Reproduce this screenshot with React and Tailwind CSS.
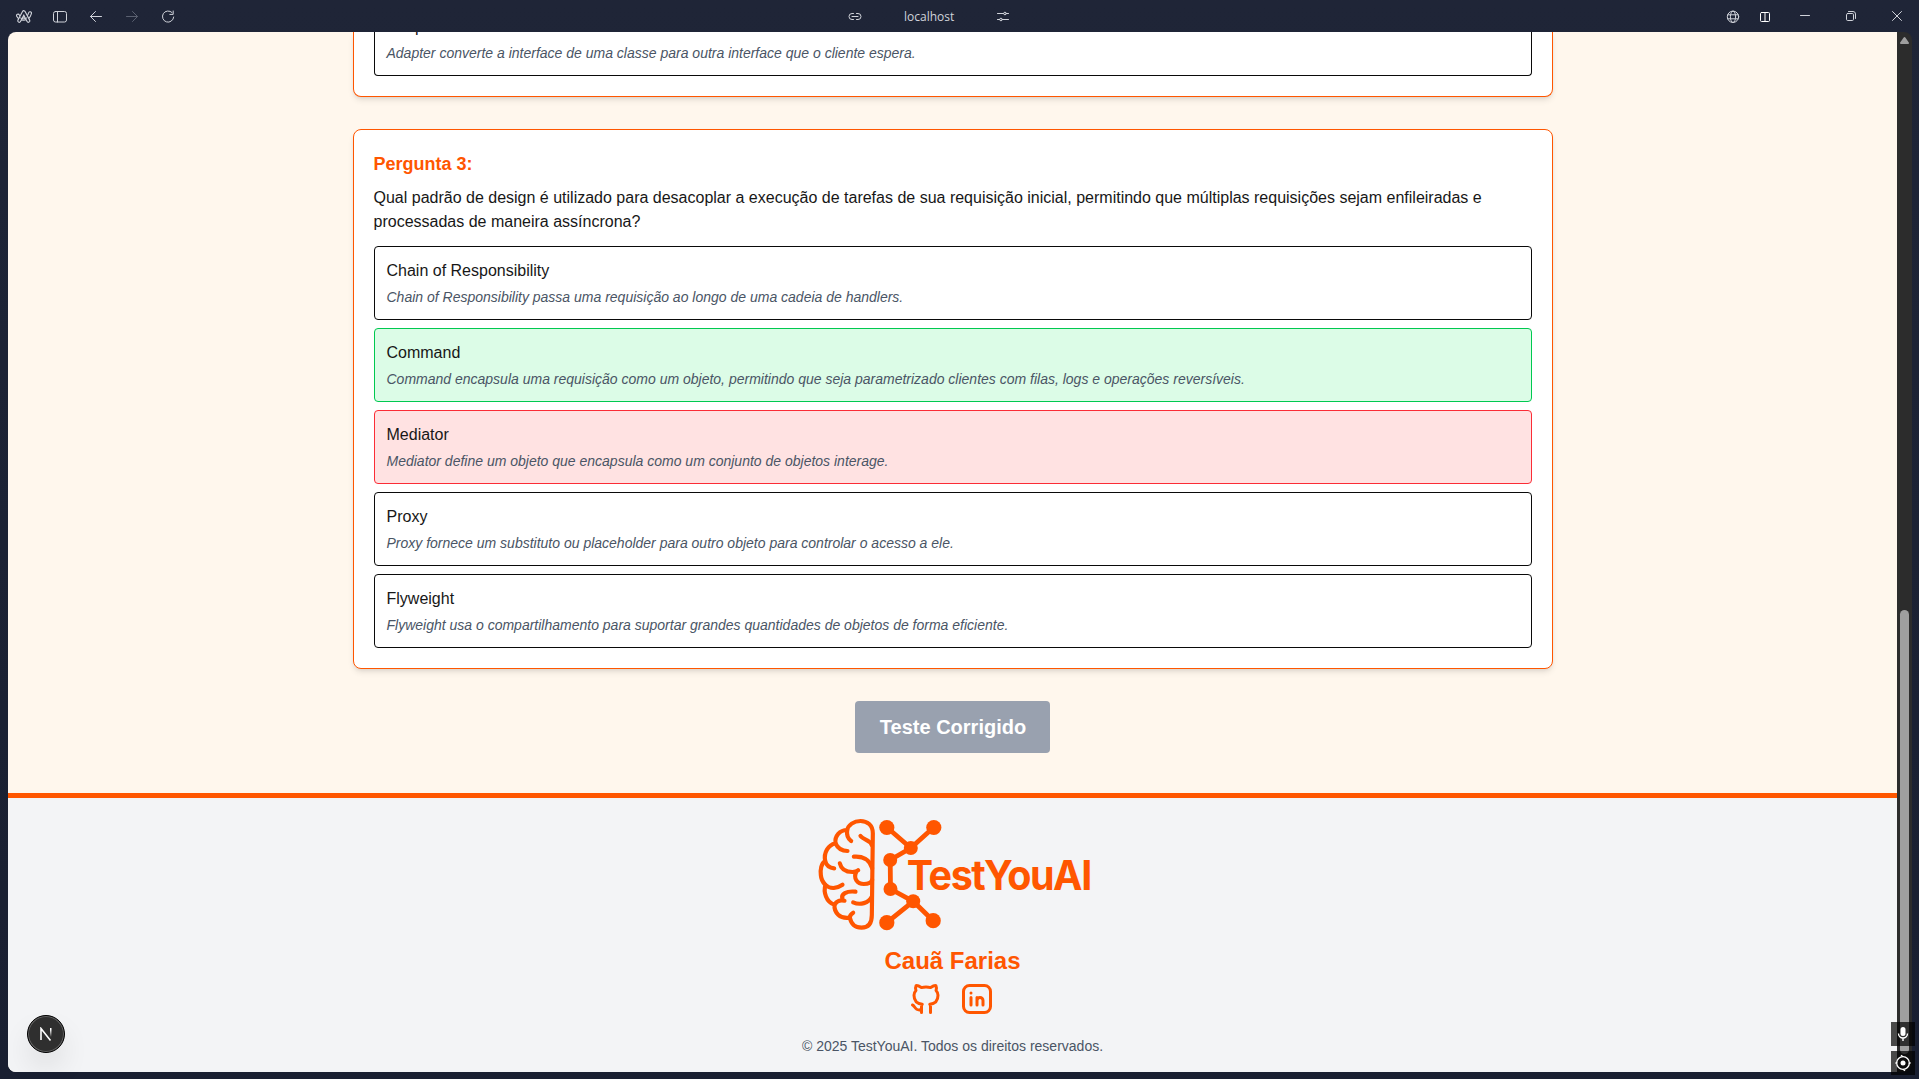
import React from "react";

const questionOptions = [
  { title: "Chain of Responsibility", note: "Chain of Responsibility passa uma requisição ao longo de uma cadeia de handlers.", tone: "border-[#0a0a0a]" },
  { title: "Command", note: "Command encapsula uma requisição como um objeto, permitindo que seja parametrizado clientes com filas, logs e operações reversíveis.", tone: "border-[#00c950] bg-[#dcfce7]" },
  { title: "Mediator", note: "Mediator define um objeto que encapsula como um conjunto de objetos interage.", tone: "border-[#fb2c36] bg-[#ffe2e2]" },
  { title: "Proxy", note: "Proxy fornece um substituto ou placeholder para outro objeto para controlar o acesso a ele.", tone: "border-[#0a0a0a]" },
  { title: "Flyweight", note: "Flyweight usa o compartilhamento para suportar grandes quantidades de objetos de forma eficiente.", tone: "border-[#0a0a0a]" },
];

function Glyph({ w = 16, h = 16, className = "", sw = 1, children }) {
  return (
    <svg width={w} height={h} viewBox={`0 0 ${w} ${h}`} className={`shrink-0 ${className}`} fill="none" stroke="currentColor" strokeWidth={sw} strokeLinecap="round" strokeLinejoin="round">
      {children}
    </svg>
  );
}

function TitleBar() {
  return (
    <header className="flex h-8 shrink-0 pt-2 text-[#d0d3da]">
      <div className="flex w-[847px] gap-5 pl-4">
        <Glyph>
          <path d="M2 7.600C4 11.600 12 12.600 14 5.200" strokeWidth="4" />
          <path d="M2 7.600C4 11.600 12 12.600 14 5.200" strokeWidth="1.800" stroke="#1f2537" />
          <path d="M3.200 12.800L7.800 4.200L12.400 12.800" strokeWidth="4" />
          <path d="M3.200 12.800L7.800 4.200L12.400 12.800" strokeWidth="1.800" stroke="#1f2537" />
          <path d="M4.500 10C6.500 11 9 11 10.800 10" strokeWidth="1" />
        </Glyph>
        <Glyph>
          <rect x="1.500" y="3.500" width="13" height="10.500" rx="2" />
          <path d="M5.500 4v10" />
        </Glyph>
        <Glyph>
          <path d="M2.500 8.500h11M7.500 3.500l-5 5 5 5" />
        </Glyph>
        <Glyph className="text-[#5a6070]">
          <path d="M2.500 8.500h11M8.500 3.500l5 5-5 5" />
        </Glyph>
        <Glyph>
          <path d="M12 4.500a5.600 5.600 0 1 0 1.700 4.500M13.200 3v3.400H9.800" />
        </Glyph>
      </div>
      <Glyph>
        <path d="M6.500 5.500H5a3 3 0 0 0 0 6h1.500M9.500 5.500H11a3 3 0 0 1 0 6H9.500M5 8.500h6" />
      </Glyph>
      <span className="ml-[41px] w-[91px] font-['Open_Sans',sans-serif] text-[12px] leading-[17px]">localhost</span>
      <Glyph>
        <path d="M2.500 5.500h6M11.500 5.500h2M2.500 11.500h2M7.500 11.500h6" />
        <circle cx="10" cy="5.500" r="1.300" />
        <circle cx="6" cy="11.500" r="1.300" />
      </Glyph>
      <div className="flex flex-1 justify-end pr-[14px]">
        <Glyph className="mr-4">
          <circle cx="8" cy="8.800" r="5.700" />
          <ellipse cx="8" cy="8.800" rx="2.600" ry="5.700" />
          <path d="M2.800 6.800h10.400M2.800 10.800h10.400" />
        </Glyph>
        <Glyph className="mr-6 text-white">
          <rect x="3.500" y="4.500" width="9" height="9" rx="1" />
          <path d="M8 5v8.500" />
        </Glyph>
        <Glyph className="mr-[30px]">
          <path d="M3.500 7.500h9" />
        </Glyph>
        <Glyph className="mr-[30px]">
          <rect x="3.500" y="5.500" width="7" height="7" rx="1.200" />
          <path d="M5.500 3.500H10A2.500 2.500 0 0 1 12.500 6v4.500" />
        </Glyph>
        <Glyph>
          <path d="M3.500 3.500l9 9M12.500 3.500l-9 9" />
        </Glyph>
      </div>
    </header>
  );
}

function Option({ title, note, tone }) {
  return (
    <li className={`rounded-[4px] border p-3 ${tone}`}>
      <p className="text-base text-[#171717]">{title}</p>
      <p className="mt-1 text-sm text-[#4a5565] italic">{note}</p>
    </li>
  );
}

function Logo() {
  return (
    <svg width="290" height="120" viewBox="0 0 290 120" className="overflow-visible text-[#ff5600]" fill="none" stroke="currentColor" strokeLinecap="round" strokeLinejoin="round">
      <g strokeWidth="12.500" transform="translate(-14.500 -34) scale(0.33333)">
        <path d="M214 405L217 160C217 135 200 123 180 123C160 123 143 135 140 150C118 150 102 168 105 190C83 196 69 217 74 243C62 250 59 270 61 285C62 300 68 308 75 315C68 335 77 367 102 374C100 397 118 418 148 413C152 432 165 443 183 443C203 443 214 430 214 405Z" />
        <path d="M140 150C138 165 142 176 152 183M105 190C112 205 125 213 141 213M74 243C78 258 88 264 101 265M180 168C190 181 206 178 214 195" />
        <path d="M160 230C185 228 208 237 215 265M118 250C122 268 136 276 156 276C165 276 170 274 173 271M167 276C158 295 170 312 190 312C203 312 212 308 215 300" />
        <path d="M75 315C90 328 110 325 126 314M102 374C108 364 120 359 132 362M126 358C120 342 138 332 165 335M158 367C178 376 205 370 214 350M148 413C148 407 152 402 158 398" />
      </g>
      <path strokeWidth="4.800" d="M71.800 13.300L95.800 34L118.800 13.300M95.800 34L75.200 46L75.500 75L98.200 87.300L118.200 106.700M98.200 87.300L71.800 108.700" />
      <g fill="currentColor" stroke="none">
        <circle cx="71.800" cy="13.500" r="7.600" />
        <circle cx="118.800" cy="13.500" r="7.600" />
        <circle cx="95.800" cy="34" r="7" />
        <circle cx="75.200" cy="46" r="7" />
        <circle cx="75.500" cy="75" r="7" />
        <circle cx="98.200" cy="87.300" r="7" />
        <circle cx="118.200" cy="106.700" r="7.600" />
        <circle cx="71.800" cy="108.700" r="7.600" />
        <text x="91.800" y="75.600" fontSize="41" fontWeight="700" letterSpacing="-1.500" textLength="184" lengthAdjust="spacingAndGlyphs" className="font-['Inter',sans-serif]">TestYouAI</text>
      </g>
    </svg>
  );
}

function Social() {
  const common = { width: 36, height: 36, viewBox: "0 0 24 24", fill: "none", stroke: "currentColor", strokeWidth: 2, strokeLinecap: "round", strokeLinejoin: "round" };
  return (
    <div className="mr-0.5 flex gap-[15px] text-[#ff5600]">
      <svg {...common}>
        <path d="M9 19c-4.3 1.4 -4.3 -2.5 -6 -3m12 5v-3.5c0 -1 .1 -1.4 -.5 -2c2.8 -.3 5.5 -1.4 5.5 -6a4.6 4.6 0 0 0 -1.3 -3.2a4.2 4.2 0 0 0 -.1 -3.2s-1.1 -.3 -3.5 1.3a12.3 12.3 0 0 0 -6.2 0c-2.4 -1.6 -3.5 -1.3 -3.5 -1.3a4.2 4.2 0 0 0 -.1 3.2a4.6 4.6 0 0 0 -1.3 3.2c0 4.6 2.7 5.7 5.5 6c-.6 .6 -.6 1.2 -.5 2v3.5" />
      </svg>
      <svg {...common}>
        <path d="M8 11v5M8 8v.01M12 16v-5M16 16v-3a2 2 0 1 0 -4 0" />
        <rect x="3" y="3" width="18" height="18" rx="4" />
      </svg>
    </div>
  );
}

function Footer() {
  return (
    <footer className="flex h-[279px] shrink-0 flex-col items-center border-t-5 border-[#ff5600] bg-[#f3f4f6]">
      <div className="mt-4 ml-[14px] h-[120px]">
        <Logo />
      </div>
      <p className="mt-[11px] text-2xl font-bold text-[#ff5600]">Cauã Farias</p>
      <div className="mt-[3.5px]">
        <Social />
      </div>
      <p className="mt-[19.5px] text-sm text-[#4a5565]">© 2025 TestYouAI. Todos os direitos reservados.</p>
    </footer>
  );
}

export default function App() {
  return (
    <div className="relative flex h-[1079px] w-[1919px] flex-col overflow-hidden bg-linear-to-b from-[#1f2537] to-[#191f31] font-['Liberation_Sans',Arial,sans-serif]">
      <TitleBar />
      <div className="mr-[7px] ml-2 flex h-[1040px] overflow-hidden rounded-lg">
        <div className="flex w-[1889px] flex-col bg-[#fff7ed]">
          <main className="flex flex-1 flex-col items-center">
            <section className="flex h-[65px] w-[1200px] flex-col justify-end rounded-b-lg border border-t-0 border-[#ff5600] bg-white px-5 pb-5 shadow-md">
              <div className="flex h-11 flex-col justify-end overflow-hidden rounded-b-[4px] border border-t-0 border-[#0a0a0a] px-3 pb-3">
                <p className="shrink-0 text-base text-[#171717]">Adapter</p>
                <p className="mt-1 shrink-0 text-sm text-[#4a5565] italic">Adapter converte a interface de uma classe para outra interface que o cliente espera.</p>
              </div>
            </section>
            <section className="mt-8 w-[1200px] rounded-lg border border-[#ff5600] bg-white p-5 shadow-md">
              <h2 className="mb-2 text-lg leading-7 font-bold text-[#ff5600]">Pergunta 3:</h2>
              <p className="mb-3 text-base text-[#171717]">Qual padrão de design é utilizado para desacoplar a execução de tarefas de sua requisição inicial, permitindo que múltiplas requisições sejam enfileiradas e processadas de maneira assíncrona?</p>
              <ul className="flex flex-col gap-2">
                {questionOptions.map((option) => (
                  <Option key={option.title} {...option} />
                ))}
              </ul>
            </section>
            <button className="mt-8 h-[52px] w-[195px] rounded-[4px] bg-[#99a1af] pl-px text-xl font-bold text-white">Teste Corrigido</button>
          </main>
          <Footer />
        </div>
        <div className="flex w-[15px] flex-col items-center bg-[#2c2c2c]">
          <Glyph w={15} h={16} className="text-[#9f9f9f]">
            <path d="M4 11L7.500 6L11 11Z" fill="currentColor" strokeWidth="2" />
          </Glyph>
          <div className="mt-[562px] h-[444px] w-[9px] rounded-full bg-[#9f9f9f]" />
        </div>
      </div>

      <div className="absolute top-[1015px] left-[27px] flex size-[38px] items-center justify-center rounded-full border border-black bg-[#2f2f2f] shadow-[0_16px_32px_-8px_rgba(0,0,0,0.24),inset_0_0_0_1px_rgba(255,255,255,0.25)]">
        <svg width="14" height="14" viewBox="0 0 14 14" fill="none" strokeWidth="1.600">
          <defs>
            <linearGradient id="nFade" x1="0" y1="0" x2="0" y2="1">
              <stop offset="0.2" stopColor="#fff" />
              <stop offset="1" stopColor="#fff" stopOpacity="0" />
            </linearGradient>
          </defs>
          <path d="M2 13V1.500L11.500 13.500" stroke="#fff" />
          <rect x="11" y="1" width="1.500" height="9" fill="url(#nFade)" />
        </svg>
      </div>

      <div className="absolute top-[1022px] left-[1891px] flex flex-col gap-[5px] text-white">
        <div className="flex size-6 items-center justify-center bg-black/70">
          <svg width="24" height="24" viewBox="0 0 24 24" fill="none" stroke="currentColor" strokeWidth="1.400">
            <rect x="9.500" y="5" width="5" height="9" rx="2.500" fill="currentColor" stroke="none" />
            <path d="M7.500 11.500a4.500 4.500 0 0 0 9 0M12 16v3" />
          </svg>
        </div>
        <div className="flex size-6 items-center justify-center bg-black/70">
          <svg width="24" height="24" viewBox="0 0 24 24" fill="none" stroke="currentColor" strokeWidth="1.300">
            <circle cx="12" cy="12" r="6.300" />
            <circle cx="12" cy="12" r="2.500" fill="currentColor" stroke="none" />
            <path d="M10 4.200l2 1.500M14 19.800l-2-1.500M4.500 12.500l1.500-1.500M19.500 11.500l-1.500 1.500" />
          </svg>
        </div>
      </div>
    </div>
  );
}
